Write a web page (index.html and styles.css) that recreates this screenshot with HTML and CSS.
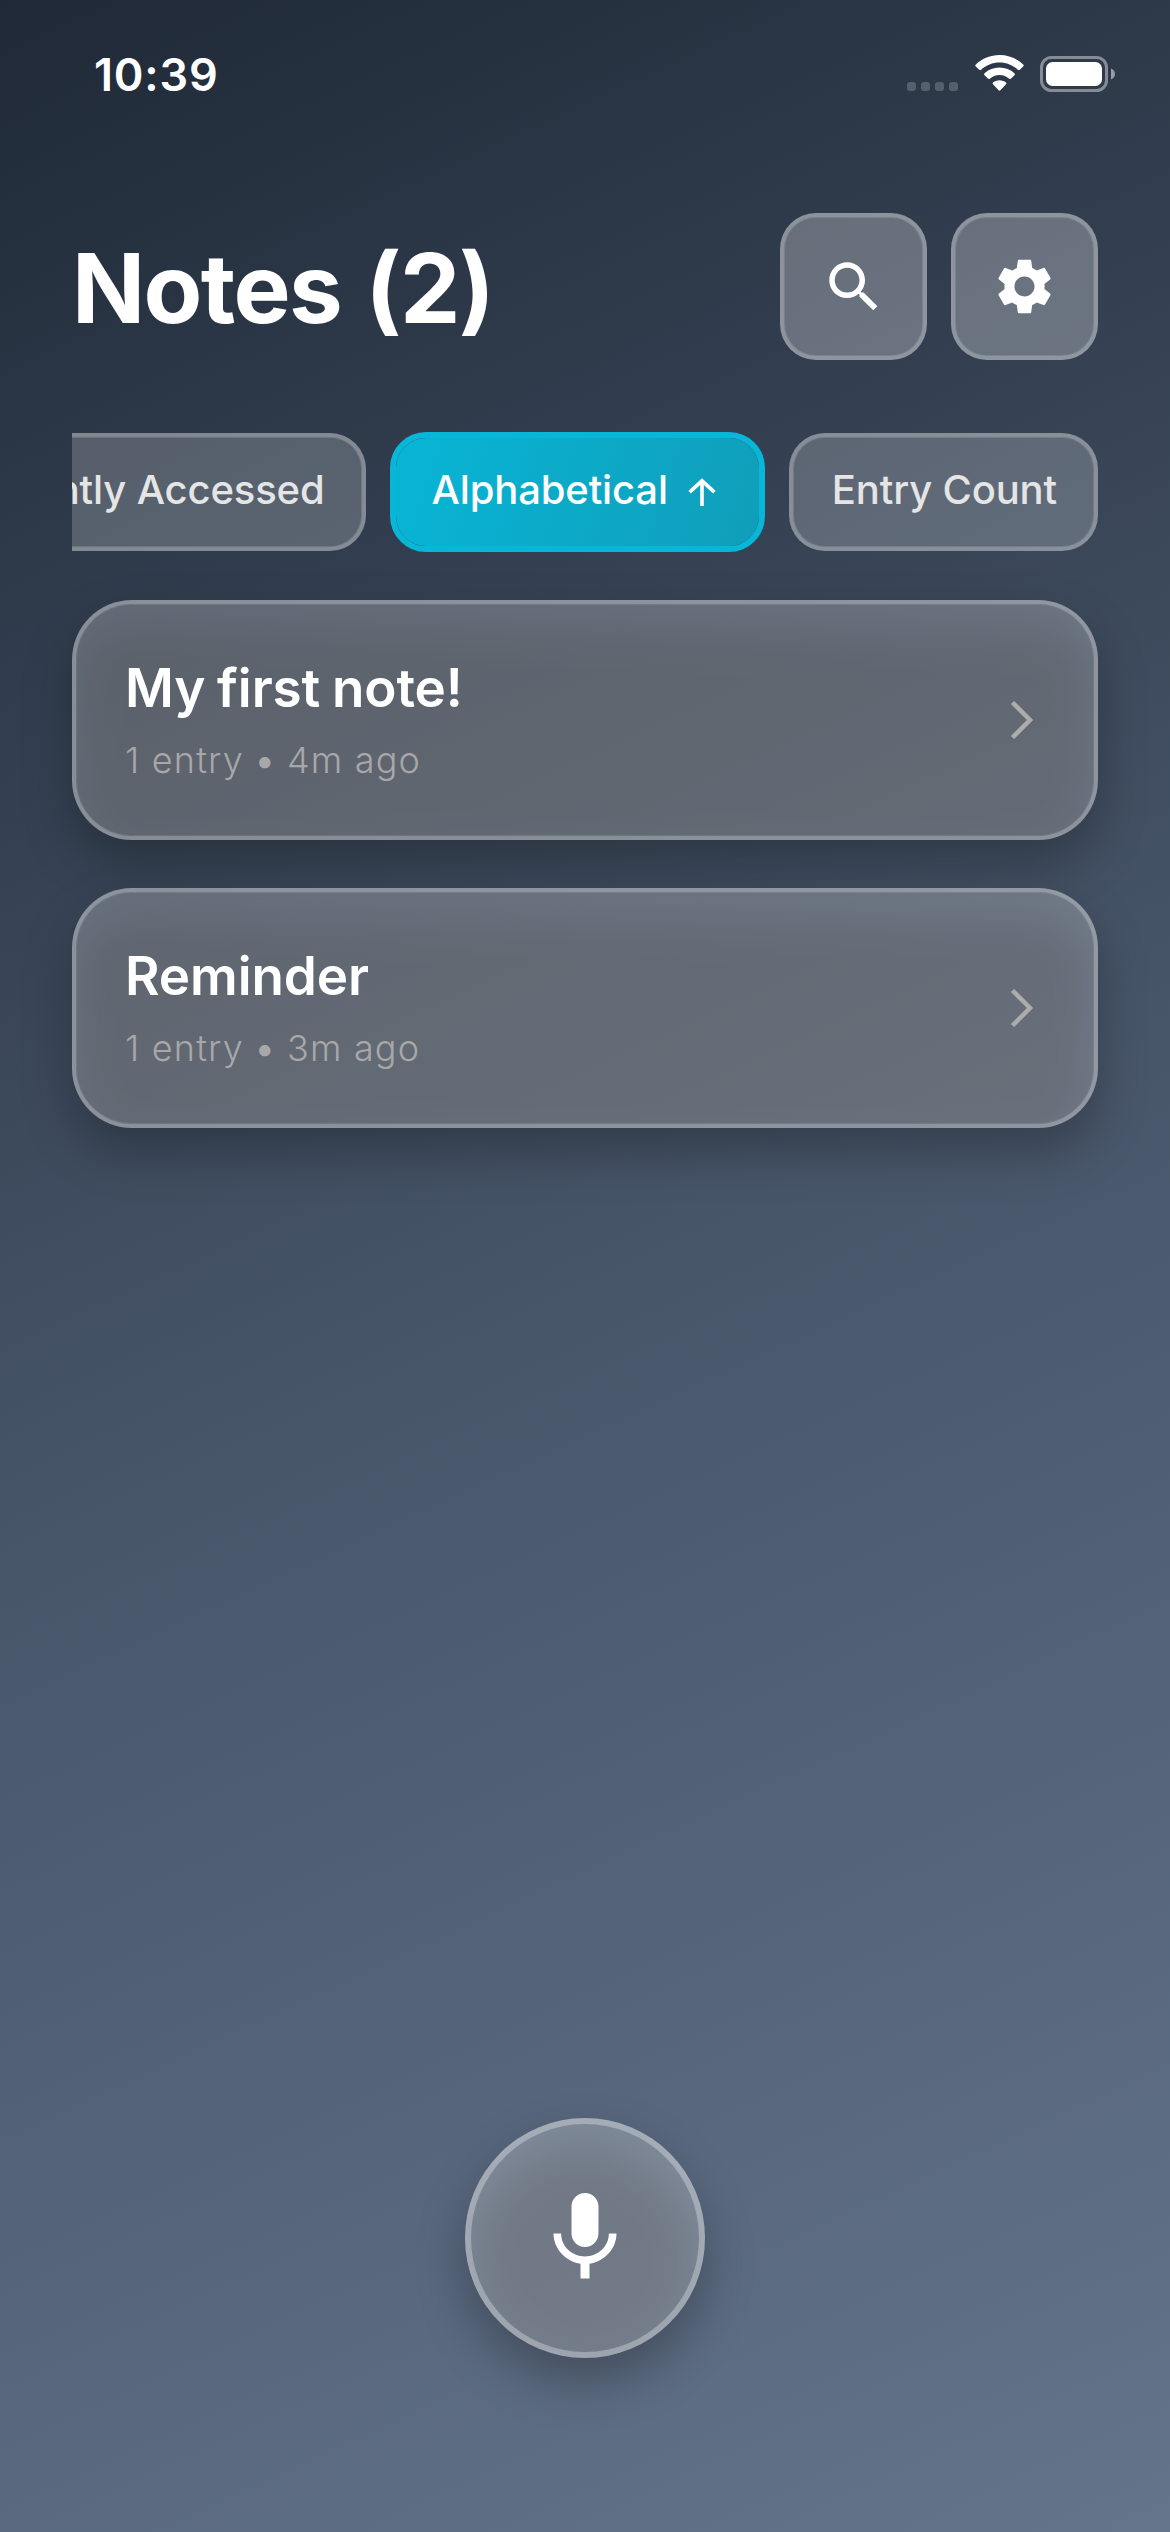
FILE: index.html
```html
<!DOCTYPE html>
<html lang="en">
<head>
<meta charset="utf-8">
<title>Notes</title>
<link rel="stylesheet" href="styles.css">
</head>
<body>
<div class="screen">
  <div class="status-bar">
    <span class="status-time">10:39</span>
    <div class="status-icons">
      <div class="signal"><i></i><i></i><i></i><i></i></div>
      <svg class="wifi" viewBox="0 0 49 36" width="49" height="36" fill="#fff">
        <path d="M24.500 0.000C33.500 0.000 41.800 3.500 48.200 9.400Q49.200 10.400 48.200 11.400L44.800 14.800Q43.900 15.700 42.900 14.800C37.900 10.200 31.500 7.600 24.500 7.600S11.100 10.200 6.100 14.800Q5.100 15.700 4.200 14.800L0.800 11.400Q-0.200 10.400 0.800 9.400C7.200 3.500 15.500 0.000 24.500 0.000Z"/>
        <path d="M24.500 12.500C30.300 12.500 35.500 14.700 39.500 18.300Q40.400 19.200 39.500 20.200L36.100 23.600Q35.200 24.500 34.200 23.700C31.600 21.400 28.200 20.000 24.500 20.000S17.400 21.400 14.800 23.700Q13.800 24.500 12.900 23.600L9.500 20.200Q8.600 19.200 9.500 18.300C13.500 14.700 18.700 12.500 24.500 12.500Z"/>
        <path d="M24.500 25.300C27.000 25.300 29.300 26.200 31.000 27.600Q31.800 28.400 31.000 29.300L25.400 35.300Q24.500 36.200 23.600 35.300L18.000 29.300Q17.200 28.400 18.000 27.600C19.700 26.200 22.000 25.300 24.500 25.300Z"/>
      </svg>
      <svg class="battery" viewBox="0 0 75 36" width="75" height="36">
        <rect x="1.500" y="1.500" width="65" height="33" rx="10" fill="none" stroke="#fff" stroke-opacity=".42" stroke-width="3"/>
        <rect x="6" y="6" width="56" height="24" rx="6.500" fill="#fff"/>
        <path d="M71 12.500c2.500 1 4 3.200 4 5.500s-1.500 4.500-4 5.500z" fill="#fff" fill-opacity=".5"/>
      </svg>
    </div>
  </div>

  <header class="header">
    <h1 class="title">Notes (2)</h1>
    <div class="actions">
      <button class="icon-button" aria-label="Search">
        <svg viewBox="0 0 24 24" width="66" height="66" fill="#fff"><path d="M15.500 14h-.79l-.28-.27C15.410 12.590 16 11.110 16 9.500 16 5.910 13.090 3 9.500 3S3 5.910 3 9.500 5.910 16 9.500 16c1.610 0 3.090-.59 4.230-1.570l.27.28v.79l5 4.990L20.490 19l-4.990-5zm-6 0C7.010 14 5 11.990 5 9.500S7.010 5 9.500 5 14 7.010 14 9.500 11.990 14 9.500 14z"/></svg>
      </button>
      <button class="icon-button" aria-label="Settings">
        <svg viewBox="0 0 24 24" width="67" height="67" fill="#fff"><path d="M19.140 12.940c.04-.3.06-.61.06-.94 0-.32-.02-.64-.07-.94l2.030-1.580c.18-.14.23-.41.12-.61l-1.920-3.320c-.12-.22-.37-.29-.59-.22l-2.390.96c-.5-.38-1.030-.7-1.620-.94l-.36-2.540c-.04-.24-.24-.41-.48-.41h-3.840c-.24 0-.43.17-.47.41l-.36 2.540c-.59.24-1.130.57-1.620.94l-2.390-.96c-.22-.08-.47 0-.59.22L2.740 8.870c-.12.21-.08.47.12.61l2.030 1.580c-.05.3-.09.63-.09.94s.02.64.07.94l-2.030 1.580c-.18.14-.23.41-.12.61l1.920 3.320c.12.22.37.29.59.22l2.390-.96c.5.38 1.030.7 1.620.94l.36 2.540c.05.24.24.41.48.41h3.840c.24 0 .44-.17.47-.41l.36-2.540c.59-.24 1.130-.56 1.620-.94l2.390.96c.22.08.47 0 .59-.22l1.920-3.320c.12-.22.07-.47-.12-.61l-2.010-1.580zM12 15.600c-1.980 0-3.600-1.620-3.600-3.600s1.620-3.600 3.600-3.600 3.600 1.620 3.600 3.600-1.620 3.600-3.600 3.600z"/></svg>
      </button>
    </div>
  </header>

  <div class="sort-row">
    <div class="chip">Recently Accessed</div>
    <div class="chip chip-active">
      <span>Alphabetical</span>
      <svg class="arrow" viewBox="0 0 30 30" width="30" height="30"><path d="M15 29V4.500M2.600 15.200L15 3.800L27.400 15.200"/></svg>
    </div>
    <div class="chip">Entry Count</div>
  </div>

  <main class="notes">
    <article class="card">
      <div class="card-text">
        <h2 class="card-title">My first note!</h2>
        <p class="card-meta">1 entry <span class="dot">•</span> 4m ago</p>
      </div>
      <svg class="chevron" viewBox="0 0 24 42" width="24" height="42"><path d="M2.500 3.500L20 21L2.500 38.500"/></svg>
    </article>
    <article class="card">
      <div class="card-text">
        <h2 class="card-title">Reminder</h2>
        <p class="card-meta">1 entry <span class="dot">•</span> 3m ago</p>
      </div>
      <svg class="chevron" viewBox="0 0 24 42" width="24" height="42"><path d="M2.500 3.500L20 21L2.500 38.500"/></svg>
    </article>
  </main>

  <footer class="record">
    <button class="mic-button" aria-label="Record">
      <svg viewBox="0 0 24 24" width="108" height="108" fill="#fff"><path d="M12 14c1.660 0 2.990-1.340 2.990-3L15 5c0-1.660-1.340-3-3-3S9 3.340 9 5v6c0 1.660 1.340 3 3 3zm5.300-3c0 3-2.540 5.100-5.300 5.100S6.700 14 6.700 11H5c0 3.410 2.720 6.230 6 6.720V21h2v-3.280c3.280-.48 6-3.300 6-6.720h-1.700z"/></svg>
    </button>
  </footer>
</div>
</body>
</html>
```

FILE: styles.css
```css
* {
  box-sizing: border-box;
}

body {
  margin: 0;
  font-family: Inter, "Liberation Sans", sans-serif;
  color: #fff;
}

h1,
h2,
p {
  margin: 0;
}

button {
  padding: 0;
  font: inherit;
}

.screen {
  display: flex;
  flex-direction: column;
  width: 1170px;
  height: 2532px;
  overflow: hidden;
  isolation: isolate;
  background: linear-gradient(155.2deg, #1f2937 0%, #475569 50%, #64748b 100%);
}

.status-bar {
  display: flex;
  align-items: center;
  justify-content: space-between;
  height: 148px;
  padding: 0 55px 0 94px;
}

.status-time {
  padding-top: 1px;
  font-size: 45px;
  font-weight: 600;
  line-height: 54px;
  letter-spacing: 0.8px;
}

.status-icons {
  display: flex;
  align-items: center;
}

.signal {
  display: flex;
  align-self: flex-end;
  gap: 5px;
  margin: 0 17px 1px 0;
}

.signal i {
  width: 9px;
  height: 9px;
  border-radius: 3px;
  background: rgba(255, 255, 255, 0.2);
}

.wifi {
  margin: -1px 16px 1px 0;
}

.header {
  display: flex;
  align-items: center;
  justify-content: space-between;
  margin-top: 65px;
  padding: 0 72px;
}

.title {
  padding-top: 3px;
  font-size: 96px;
  font-weight: 700;
  line-height: 116px;
  letter-spacing: -1.6px;
  word-spacing: 3px;
}

.actions {
  display: flex;
  gap: 24px;
}

.icon-button {
  display: flex;
  align-items: center;
  justify-content: center;
  width: 147px;
  height: 147px;
  border: 4px solid rgba(255, 255, 255, 0.25);
  border-radius: 36px;
  background: rgba(255, 255, 255, 0.27);
  box-shadow: inset 0 0 0 1px rgba(255, 255, 255, 0.12);
}

.sort-row {
  display: flex;
  align-items: center;
  justify-content: flex-end;
  gap: 24px;
  margin: 72px 72px 0;
  height: 120px;
  overflow: hidden;
}

.chip {
  display: flex;
  flex: none;
  align-items: center;
  height: 118px;
  padding: 0 37px 4px 39px;
  border: 4px solid rgba(255, 255, 255, 0.26);
  border-radius: 36px;
  background: rgba(255, 255, 255, 0.2);
  box-shadow: inset 0 0 0 1px rgba(255, 255, 255, 0.13);
  color: #e5e5e5;
  font-size: 40px;
  font-weight: 500;
  line-height: 50px;
  letter-spacing: -0.15px;
  white-space: nowrap;
}

.chip-active {
  gap: 19px;
  height: 120px;
  padding: 0 42px 4px 36px;
  border: 6px solid #08b6d7;
  background: linear-gradient(107.8deg, #08b5d6, #109eba) padding-box;
  box-shadow: none;
  color: #fff;
}

.arrow {
  margin-top: 4px;
  fill: none;
  stroke: #fff;
  stroke-width: 3.6px;
}

.notes {
  display: flex;
  flex-direction: column;
  gap: 48px;
  padding: 48px 72px 0;
}

.card {
  position: relative;
  display: flex;
  align-items: center;
  justify-content: space-between;
  height: 240px;
  padding: 0 60px 0 49px;
  border: 4px solid rgba(255, 255, 255, 0.25);
  border-radius: 60px;
  background: rgba(255, 255, 255, 0.25);
  box-shadow: inset 0 0 0 1px rgba(255, 255, 255, 0.08);
}

/* Shadow that also shows through the translucent surface */
.card::before,
.mic-button::before {
  content: "";
  position: absolute;
  z-index: -1;
  inset: 20px -4px -28px;
  border-radius: 60px;
  background: rgba(0, 0, 0, 0.26);
  filter: blur(24px);
}

.card-text {
  padding-bottom: 1px;
}

.card-title {
  font-size: 53px;
  font-weight: 600;
  line-height: 65px;
  letter-spacing: -0.1px;
  word-spacing: -1.5px;
}

.card-meta {
  margin-top: 15px;
  color: #a8a8a8;
  font-size: 36px;
  font-weight: 300;
  line-height: 48px;
  letter-spacing: 1.2px;
}

.dot {
  margin: 0 1px;
  font-weight: 700;
}

.chevron {
  fill: none;
  stroke: #acacac;
  stroke-width: 4.5px;
}

.record {
  display: flex;
  justify-content: center;
  margin-top: auto;
  padding-bottom: 174px;
}

.mic-button {
  position: relative;
  display: flex;
  align-items: center;
  justify-content: center;
  width: 240px;
  height: 240px;
  border: 6px solid rgba(255, 255, 255, 0.3);
  border-radius: 50%;
  background: rgba(255, 255, 255, 0.25);
}

.mic-button::before {
  inset: 18px -6px -30px;
  border-radius: 50%;
}
```
